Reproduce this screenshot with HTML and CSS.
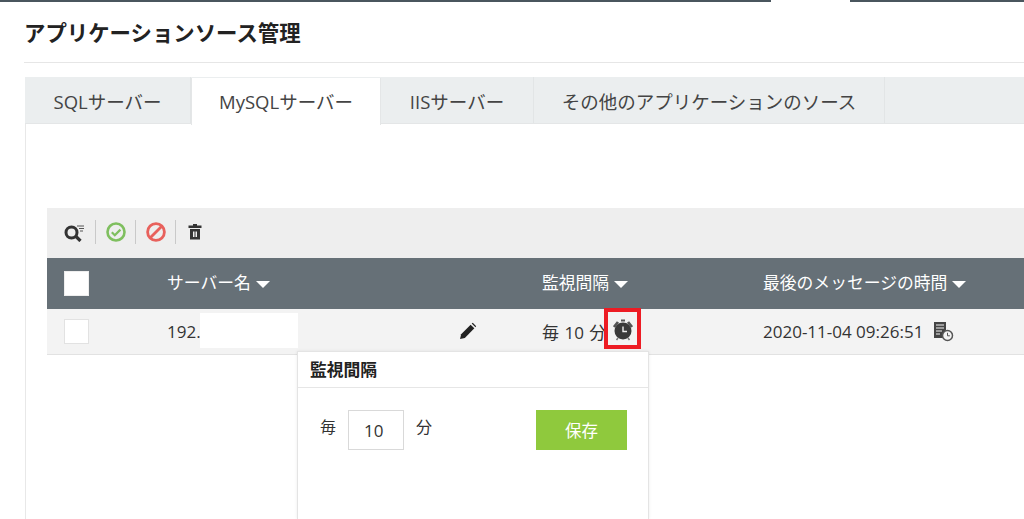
FILE: index.html
```html
<!DOCTYPE html>
<html lang="ja">
	<head>
		<meta charset="UTF-8">
		<title>アプリケーションソース管理</title>
		<link rel="stylesheet" href="styles.css">
	</head>
	<body>
		<div class="top-bar">
			<div class="top-bar-left"></div>
			<div class="top-bar-right"></div>
		</div>
		<h1 class="page-title">アプリケーションソース管理</h1>

		<ul class="tabs">
			<li class="tab tab-sql">SQLサーバー</li>
			<li class="tab tab-mysql active">MySQLサーバー</li>
			<li class="tab tab-iis">IISサーバー</li>
			<li class="tab tab-other">その他のアプリケーションのソース</li>
			<li class="tab-rest"></li>
		</ul>

		<div class="panel">
			<div class="toolbar">
				<svg class="tool tool-search" width="21" height="19" viewBox="0 0 21 19">
					<circle cx="7.500" cy="9.500" r="5.500" fill="none" stroke="#333" stroke-width="3"/>
					<path d="M11.500 13l5 5" stroke="#333" stroke-width="3.200"/>
					<path d="M13 3h7M15 5.500h5M16 8h3" stroke="#555" stroke-width="1.200"/>
				</svg>
				<span class="tool-sep"></span>
				<svg class="tool" width="20" height="20" viewBox="0 0 20 20">
					<circle cx="10" cy="10" r="8.500" fill="none" stroke="#7fbf5f" stroke-width="2.600"/>
					<path d="M5.800 10.200l3 3 5.600-5.600" fill="none" stroke="#7fbf5f" stroke-width="2.200"/>
				</svg>
				<span class="tool-sep"></span>
				<svg class="tool" width="20" height="20" viewBox="0 0 20 20">
					<circle cx="10" cy="10" r="8.400" fill="none" stroke="#e8615c" stroke-width="2.800"/>
					<path d="M4 16L16 4" stroke="#e8615c" stroke-width="2.800"/>
				</svg>
				<span class="tool-sep"></span>
				<svg class="tool tool-trash" width="14" height="18" viewBox="0 0 14 18">
					<path d="M5 1h4v1.500h4.500V5H.5V2.500H5z" fill="#333"/>
					<path d="M2 6h10v10.500H2z" fill="#333"/>
					<path d="M5 8.500h1.500v5.500H5zM7.500 8.500H9v5.500H7.500z" fill="#eee"/>
				</svg>
			</div>

			<div class="grid-row grid-head">
				<div class="cell-check"><span class="check check-head"></span></div>
				<div class="col-label">サーバー名<i class="sort"></i></div>
				<div class="col-label">監視間隔<i class="sort"></i></div>
				<div class="col-label">最後のメッセージの時間<i class="sort"></i></div>
			</div>

			<div class="grid-row grid-body">
				<div class="cell-check"><span class="check"></span></div>
				<div class="col-name">
					<span class="server-ip">192.</span>
					<span class="ip-mask"></span>
					<svg class="edit-icon" width="18" height="18" viewBox="0 0 17 17">
						<path d="M1 16l1-4.500L11 2.500l3.500 3.500L5.500 15z" fill="#222"/>
						<path d="M12 1.500l1-.7 3.200 3.200-.7 1z" fill="#222"/>
					</svg>
				</div>
				<div class="col-interval">
					<span class="interval-text">毎 10 分</span>
					<span class="alarm-box">
						<svg width="24" height="24" viewBox="0 0 24 24">
							<path d="M3 9l4-5M21 9l-4-5" stroke="#555" stroke-width="2.800"/>
							<path d="M10 2.500h4" stroke="#555" stroke-width="2"/>
							<path d="M7 20l-1.500 2M17 20l1.500 2" stroke="#777" stroke-width="1.500"/>
							<circle cx="12" cy="13" r="8.500" fill="#3a3a3a"/>
							<path d="M12 8.500V13.500H16" fill="none" stroke="#eee" stroke-width="1.400"/>
						</svg>
					</span>
				</div>
				<div class="col-time">
					<span class="time-text">2020-11-04 09:26:51</span>
					<svg class="log-icon" width="21" height="21" viewBox="0 0 21 21">
						<path d="M1 1h12v16H1z" fill="#444"/>
						<path d="M3 4h8M3 7h8M3 10h6M3 13h4" stroke="#f3f3f3" stroke-width="1"/>
						<circle cx="14.500" cy="14.500" r="5" fill="#f3f3f3" stroke="#555" stroke-width="1.500"/>
						<path d="M14.500 11.800v3h2.400" fill="none" stroke="#555" stroke-width="1"/>
					</svg>
				</div>
			</div>

			<div class="popover">
				<div class="popover-title">監視間隔</div>
				<div class="popover-body">
					<span class="unit-each">毎</span>
					<input class="interval-input" type="text" value="10">
					<span class="unit-min">分</span>
					<button class="save-btn">保存</button>
				</div>
			</div>
		</div>
	</body>
</html>
```

FILE: styles.css
```css
*{
	margin: 0;
	padding: 0;
	box-sizing: border-box;
}
html,body{
	height: 519px;
	overflow: hidden;
}
body{
	background: #fff;
	color: #333;
	font-family: "Open Sans", "Noto Sans CJK JP", sans-serif;
	font-size: 17px;
}
ul{
	list-style: none;
}

/* top bar */
.top-bar{
	display: flex;
	justify-content: space-between;
	height: 2px;
}
.top-bar-left{
	width: 771px;
	background: #4a565e;
}
.top-bar-right{
	width: 174px;
	background: #4a565e;
}

.page-title{
	height: 61px;
	margin-left: 24px;
	border-bottom: 1px solid #e6e6e6;
	padding-top: 16px;
	font-size: 21.4px;
	line-height: 28px;
	font-weight: 700;
	color: #222;
	font-family: "Noto Sans CJK JP", sans-serif;
}

/* tabs */
.tabs{
	display: flex;
	height: 47px;
	margin: 14px 0 0 25px;
	background: #ebeeef;
	border-bottom: 1px solid #e4e6e7;
}
.tab{
	height: 46px;
	line-height: 50px;
	font-size: 18.5px;
	color: #444;
	text-align: center;
	border-right: 1px solid #e2e5e6;
}
.tab-sql{
	width: 166px;
}
.tab-mysql{
	width: 190px;
}
.tab-iis{
	width: 153px;
}
.tab-other{
	width: 351px;
}
.tab.active{
	height: 47px;
	margin-top: 1px;
	line-height: 48px;
	background: #fff;
	border-left: 1px solid #e4e6e7;
	border-right: 1px solid #e4e6e7;
}

/* panel */
.panel{
	position: relative;
	height: 395px;
	margin-left: 25px;
	padding: 84px 0 0 21px;
	border-left: 1px solid #e8e8e8;
}
.toolbar{
	display: flex;
	align-items: center;
	height: 50px;
	padding: 0 0 2px 17px;
	background: #eee;
}
.tool-sep{
	width: 1px;
	height: 24px;
	margin: 0 10px 0 9px;
	background: #c9c9c9;
}
.tool-search{
	margin-right: 1px;
}
.tool-trash{
	margin-left: 2px;
}

.grid-row{
	display: grid;
	grid-template-columns: 120px 375px 221px 1fr;
	align-items: center;
}
.grid-head{
	height: 51px;
	background: #667077;
	color: #fff;
	font-size: 16.8px;
}
.col-label{
	padding-bottom: 4px;
}
.grid-body{
	height: 46px;
	background: #f3f3f3;
	border-bottom: 1px solid #e2e2e2;
	color: #333;
}
.cell-check{
	padding: 0 0 1px 17px;
}
.check{
	display: block;
	width: 25px;
	height: 25px;
	background: #fff;
	border: 1px solid #e2e2e2;
}
.check-head{
	border-color: #eee;
}
.sort{
	display: inline-block;
	margin-left: 5px;
	border-left: 7px solid transparent;
	border-right: 7px solid transparent;
	border-top: 7px solid #fff;
	vertical-align: 1px;
}
.col-name{
	display: flex;
	align-items: center;
}
.server-ip{
	width: 33px;
	margin-bottom: 1px;
}
.ip-mask{
	width: 98px;
	height: 35px;
	margin-bottom: 2px;
	background: #fff;
}
.edit-icon{
	margin: 0 0 2px 161px;
}
.col-interval{
	display: flex;
	align-items: center;
}
.interval-text{
	width: 62px;
	white-space: nowrap;
	word-spacing: 1px;
	margin-bottom: 1px;
}
.alarm-box{
	display: flex;
	align-items: center;
	justify-content: center;
	width: 37px;
	height: 41px;
	padding-top: 3px;
	border: 4px solid #ed1c24;
	position: relative;
	top: -3px;
	z-index: 2;
}
.col-time{
	display: flex;
	align-items: center;
}
.time-text{
	margin-bottom: 1px;
}
.log-icon{
	margin-left: 10px;
}

/* popover */
.popover{
	position: absolute;
	top: 227px;
	left: 271px;
	width: 352px;
	height: 168px;
	background: #fff;
	border: 1px solid #e4e4e4;
	border-bottom: 0;
	z-index: 3;
	box-shadow: 0 0 3px rgba(0,0,0,.08);
}
.popover-title{
	height: 36px;
	padding-left: 12px;
	border-bottom: 1px solid #e6e6e6;
	font-size: 16.8px;
	line-height: 34px;
	font-weight: 700;
	color: #222;
	font-family: "Noto Sans CJK JP", sans-serif;
}
.popover-body{
	display: flex;
	align-items: flex-start;
	padding: 22px 21px 0 22px;
}
.unit-each{
	width: 28px;
	font-size: 16px;
	line-height: 34px;
}
.interval-input{
	width: 56px;
	height: 40px;
	padding-left: 15px;
	border: 1px solid #d9d9d9;
	font: inherit;
	color: #333;
	outline: none;
}
.unit-min{
	margin-left: 12px;
	font-size: 16px;
	line-height: 34px;
}
.save-btn{
	width: 91px;
	height: 40px;
	margin-left: auto;
	border: 0;
	background: #8fc93d;
	color: #fff;
	font: inherit;
	font-size: 16.5px;
}
```
